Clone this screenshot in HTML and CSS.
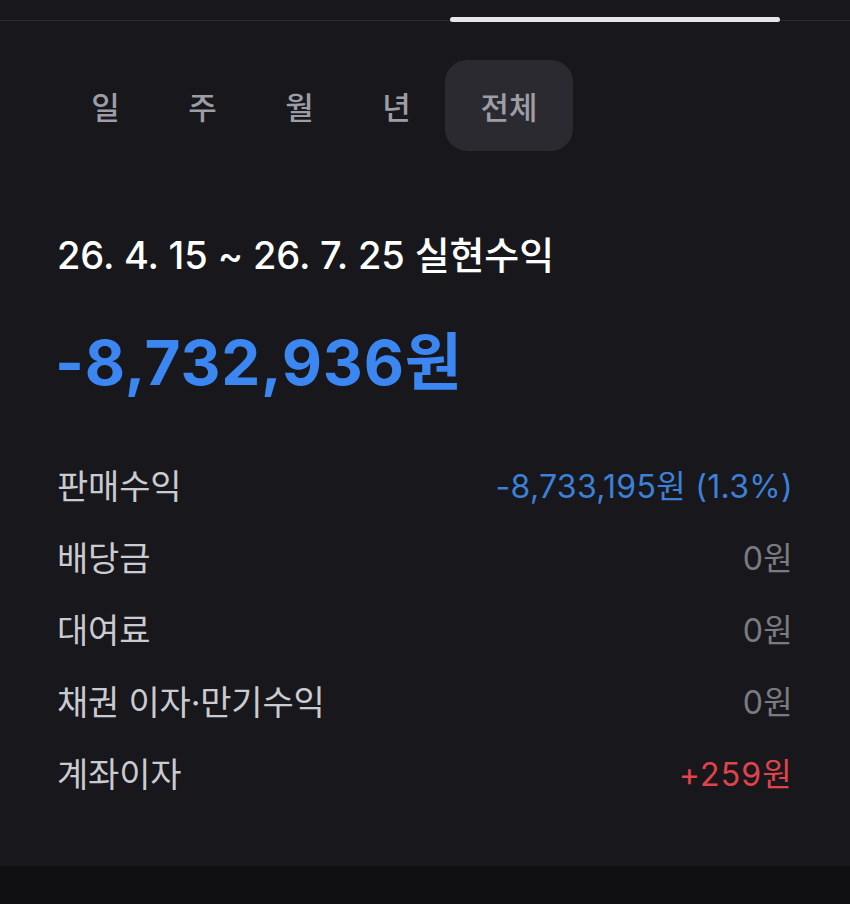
FILE: index.html
```html
<!DOCTYPE html>
<html lang="ko">
<head>
<meta charset="utf-8">
<link rel="stylesheet" href="styles.css">
</head>
<body>
<div class="screen">
  <div class="top-track">
    <div class="top-indicator"></div>
  </div>
  <div class="tabs">
    <div class="tab">일</div>
    <div class="tab">주</div>
    <div class="tab">월</div>
    <div class="tab">년</div>
    <div class="tab active">전체</div>
  </div>
  <div class="period">26. 4. 15 ~ 26. 7. 25 실현수익</div>
  <div class="total">-8,732,936원</div>
  <div class="rows">
    <div class="row"><span class="label">판매수익</span><span class="value blue">-8,733,195원 (1.3%)</span></div>
    <div class="row"><span class="label">배당금</span><span class="value gray">0원</span></div>
    <div class="row"><span class="label">대여료</span><span class="value gray">0원</span></div>
    <div class="row"><span class="label">채권 이자·만기수익</span><span class="value gray">0원</span></div>
    <div class="row"><span class="label">계좌이자</span><span class="value red">+259원</span></div>
  </div>
</div>
<div class="bottom-band"></div>
</body>
</html>
```

FILE: styles.css
```css
html, body {
  margin: 0;
  padding: 0;
  background: #17171c;
}
body {
  width: 850px;
  height: 904px;
  overflow: hidden;
  display: flex;
  flex-direction: column;
  font-family: "Inter", "Noto Sans CJK KR", sans-serif;
}
.screen {
  height: 866px;
  background: #17171c;
}
.top-track {
  margin-top: 20px;
  height: 1px;
  background: #2a2a31;
  position: relative;
}
.top-indicator {
  position: absolute;
  left: 450px;
  width: 330px;
  top: -3px;
  height: 5px;
  border-radius: 3px;
  background: #e6e6ea;
}
.tabs {
  display: flex;
  margin-top: 39px;
  padding-left: 57px;
  height: 91px;
}
.tab {
  width: 97px;
  display: flex;
  align-items: center;
  justify-content: center;
  font-size: 31px;
  color: #9d9da6;
  font-weight: 500;
}
.tab.active {
  width: 128px;
  background: #2a2a30;
  border-radius: 22px;
}
.period {
  margin-top: 80px;
  padding-left: 57px;
  font-size: 38px;
  color: #ffffff;
  font-weight: 500;
  letter-spacing: -0.1px;
  line-height: 48px;
}
.total {
  margin-top: 49px;
  padding-left: 55px;
  font-size: 62px;
  font-weight: 700;
  color: #3b86f0;
  letter-spacing: 0.8px;
  line-height: 70px;
}
.rows {
  margin-top: 65px;
  padding: 0 57px 0 57px;
  display: flex;
  flex-direction: column;
  gap: 30px;
}
.row {
  display: flex;
  justify-content: space-between;
  align-items: center;
  height: 42px;
}
.label {
  font-size: 34px;
  color: #cacad1;
  letter-spacing: -0.2px;
}
.value {
  font-size: 32px;
  letter-spacing: 0.3px;
}
.red { letter-spacing: 1.2px; }
.blue { color: #3d80d8; }
.gray { color: #7b7b83; }
.red { color: #e0434b; }
.bottom-band {
  flex: 1;
  background: #101012;
}
```
